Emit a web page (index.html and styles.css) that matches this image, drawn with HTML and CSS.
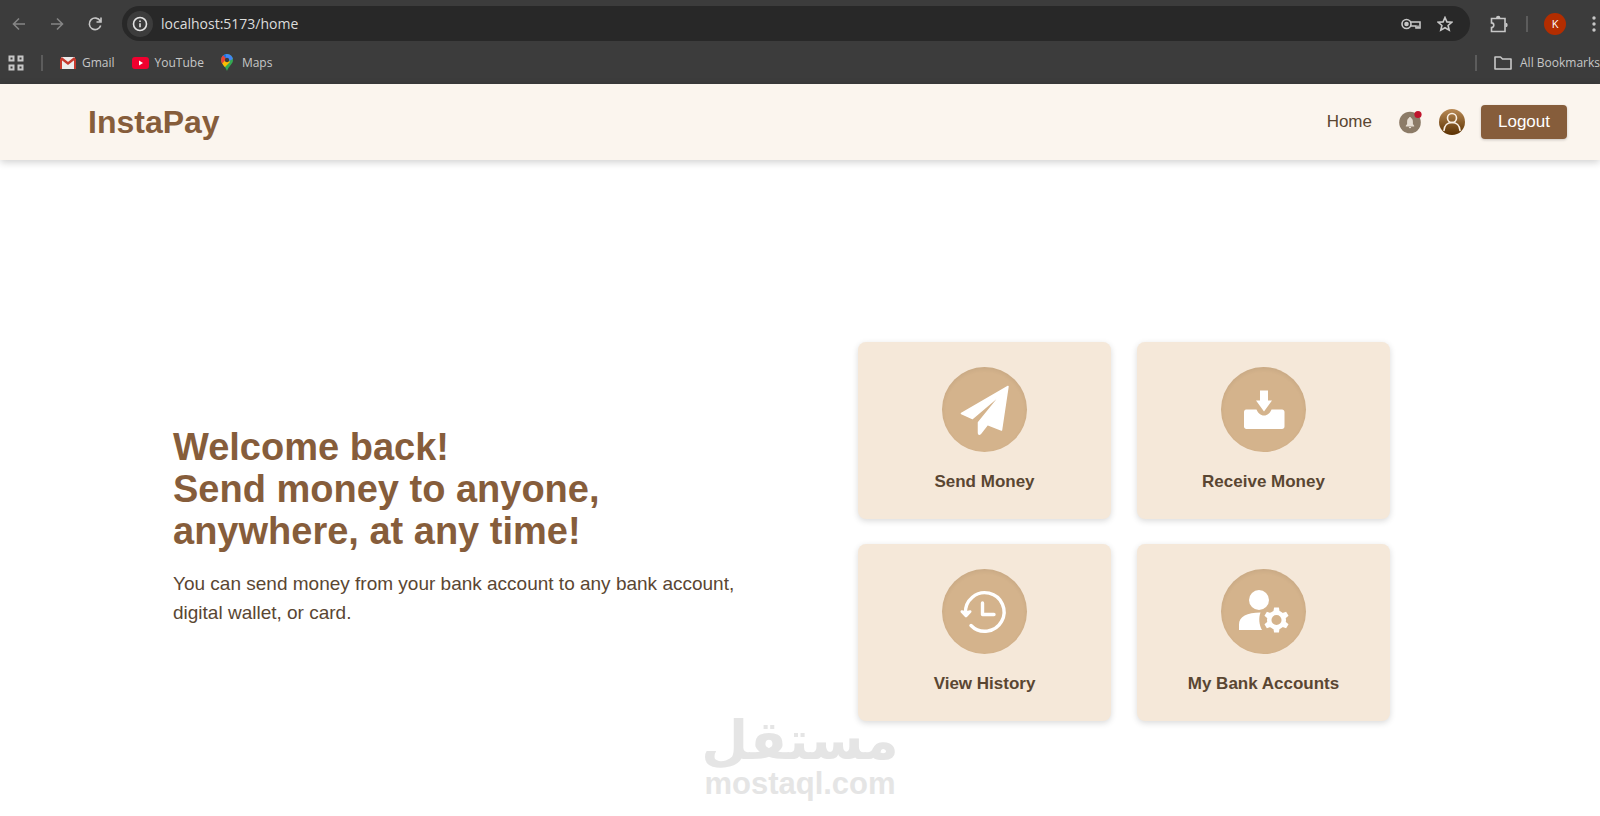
FILE: index.html
```html
<!DOCTYPE html>
<html lang="en">
<head>
    <meta charset="UTF-8">
    <meta name="viewport" content="width=device-width, initial-scale=1.0">
    <title>InstaPay</title>
    <link rel="stylesheet" href="styles.css">
</head>
<body>
    <div class="browser">
        <div class="toolbar">
            <button class="tool dim" aria-label="Back">
                <svg width="16" height="16" viewBox="0 0 16 16"><path d="M14 8H3M8 2.500L2.500 8L8 13.500"/></svg>
            </button>
            <button class="tool dim" aria-label="Forward">
                <svg width="16" height="16" viewBox="0 0 16 16"><path d="M2 8h11M8 2.500L13.500 8L8 13.500"/></svg>
            </button>
            <button class="tool" aria-label="Reload">
                <svg width="16" height="16" viewBox="0 0 16 16"><path d="M13.200 5A5.800 5.800 0 1 0 13.700 9.500M14 1.500V6H9.500"/></svg>
            </button>
            <div class="address">
                <button class="info" aria-label="Site information">
                    <svg width="16" height="16" viewBox="0 0 16 16"><circle cx="8" cy="8" r="6.500"/><path d="M8 7.200v4M8 4.500v1.600"/></svg>
                </button>
                <input class="url" type="text" value="localhost:5173/home" aria-label="Address">
                <button class="tool" aria-label="Passwords">
                    <svg width="20" height="14" viewBox="0 0 20 14"><circle cx="5.500" cy="7" r="4.500"/><circle cx="5.500" cy="7" r="1.500" fill="currentColor"/><path d="M9.700 5h9.300v6h-4V9H9.700M17 11V8.500"/></svg>
                </button>
                <button class="tool" aria-label="Bookmark">
                    <svg width="16" height="16" viewBox="0 0 16 16"><path d="M8 1.500l1.900 4.400 4.800.4-3.600 3.200 1.100 4.700L8 11.700l-4.200 2.500 1.100-4.700L1.300 6.300l4.800-.4z"/></svg>
                </button>
            </div>
            <button class="tool extensions" aria-label="Extensions">
                <svg width="18" height="18" viewBox="0 0 18 18"><path d="M1.500 3.500H15V16.500H1.500V12.500a2.300 2.300 0 0 0 0-4.600z"/><path fill="currentColor" stroke="none" d="M6 3a2.200 2.200 0 0 1 4.400 0zM15.500 7.800a2.200 2.200 0 0 1 0 4.400z"/></svg>
            </button>
            <span class="divider"></span>
            <button class="profile" aria-label="Profile">K</button>
            <button class="tool menu" aria-label="Menu">
                <svg width="4" height="16" viewBox="0 0 4 16"><g fill="currentColor" stroke="none"><circle cx="2" cy="2" r="1.700"/><circle cx="2" cy="8" r="1.700"/><circle cx="2" cy="14" r="1.700"/></g></svg>
            </button>
        </div>
        <div class="bookmarks">
            <button class="tool" aria-label="Apps">
                <svg width="16" height="16" viewBox="0 0 16 16"><path d="M1.500 1.500h4v4h-4zM10.500 1.500h4v4h-4zM1.500 10.500h4v4h-4zM10.500 10.500h4v4h-4z" stroke-width="2"/></svg>
            </button>
            <span class="divider"></span>
            <a class="bookmark" href="#">
                <svg width="16" height="16" viewBox="0 0 16 16"><path fill="#ececec" d="M1 2h14v12H1z"/><path fill="none" stroke="#c5392d" stroke-width="2" d="M1 4v10M15 4v10"/><path fill="none" stroke="#c5392d" stroke-width="2.400" d="M1 3l7 5.500L15 3"/></svg>
                Gmail
            </a>
            <a class="bookmark" href="#">
                <svg width="17" height="12" viewBox="0 0 17 12"><rect width="17" height="12" rx="3" fill="#f0002f"/><path fill="#fff" d="M7 3.500v5L11 6z"/></svg>
                YouTube
            </a>
            <a class="bookmark maps" href="#">
                <svg width="12" height="17" viewBox="0 0 12 17">
                    <clipPath id="pin"><path d="M6 0a6 6 0 0 1 6 6c0 4-4 5.500-6 11C4 11.500 0 10 0 6a6 6 0 0 1 6-6z"/></clipPath>
                    <g clip-path="url(#pin)"><path fill="#34a853" d="M0 0h12v17H0z"/><path fill="#4285f4" d="M4 0h8v5L6 8z"/><path fill="#1a73e8" d="M0 0h5v4L2 4z"/><path fill="#ea4335" d="M0 2l2-1 4 4.500-5 5-1-2z"/><path fill="#fbbc04" d="M1 10l5-6 3 4-6 6z"/></g>
                    <circle cx="6" cy="6" r="2.200" fill="#3c3c3c"/>
                </svg>
                Maps
            </a>
            <span class="divider last"></span>
            <a class="bookmark all" href="#">
                <svg width="18" height="14" viewBox="0 0 18 14"><path fill="none" stroke="#c7c7c7" stroke-width="1.600" stroke-linejoin="round" d="M1 1h5.500l2 2H17v10H1z"/></svg>
                All Bookmarks
            </a>
        </div>
    </div>

    <header class="navbar">
        <a class="logo" href="#">InstaPay</a>
        <nav class="nav-links">
            <a class="home" href="#">Home</a>
            <button class="notifications" aria-label="Notifications">
                <svg width="24" height="24" viewBox="0 0 24 24"><circle cx="11" cy="12.500" r="10.800" fill="#8c7b67"/><path fill="#e6ddd2" d="M11 7c.6 0 1 .4 1 1 1.400.5 1.900 2 1.900 4v2l1.300 1.800v.7H6.800v-.7L8.100 14v-2c0-2 .5-3.500 1.900-4 0-.6.4-1 1-1zM9.800 17h2.400a1.200 1.200 0 0 1-2.400 0z"/><circle cx="19" cy="4.500" r="3.600" fill="#c0142c"/></svg>
            </button>
            <button class="account" aria-label="Account">
                <svg width="26" height="26" viewBox="0 0 26 26">
                    <defs><linearGradient id="bronze" x1="0" y1="0" x2="0" y2="1"><stop offset="0" stop-color="#b98a55"/><stop offset="1" stop-color="#5a3000"/></linearGradient></defs>
                    <circle cx="13" cy="13" r="13" fill="url(#bronze)"/>
                    <g fill="none" stroke="#faf0e4" stroke-width="1.600" stroke-linecap="round"><circle cx="13" cy="9" r="4.500"/><path d="M5 21.500c.3-5 3.500-8 8-8s7.700 3 8 8"/></g>
                </svg>
            </button>
            <button class="logout">Logout</button>
        </nav>
    </header>

    <main class="hero">
        <section class="intro">
            <h1>Welcome back!<br>Send money to anyone,<br>anywhere, at any time!</h1>
            <p>You can send money from your bank account to any bank account, digital wallet, or card.</p>
        </section>
        <section class="actions">
            <a class="card" href="#">
                <span class="circle">
                    <svg width="50" height="50" viewBox="0 0 50 50"><path fill="#fff" stroke="#fff" stroke-linejoin="round" stroke-width="1.500" d="M48 1.500L1.500 28.500 12.500 33.500 42 8.500 18.500 37.500v10.500c0 1.500 1 1.500 2 .5l7-9L41.500 45z"/></svg>
                </span>
                Send Money
            </a>
            <a class="card" href="#">
                <span class="circle">
                    <svg width="50" height="50" viewBox="0 0 50 50"><g fill="#fff"><path d="M21 5.500h8v10h4L25 26.500l-8-11h4z"/><path d="M7 24.500h10.500c1.500 3.500 4 6 7.500 6s6-2.500 7.500-6H43c1.500 0 2.500 1 2.500 2.500v14.500c0 1.500-1 2.500-2.500 2.500H7.500C6 44 5 43 5 41.500V27C5 25.500 6 24.500 7 24.500z"/></g></svg>
                </span>
                Receive Money
            </a>
            <a class="card" href="#">
                <span class="circle">
                    <svg width="50" height="50" viewBox="0 0 50 50"><g fill="none" stroke="#fff" stroke-width="3.400" stroke-linecap="round" stroke-linejoin="round"><path d="M5.500 26A19.300 19.300 0 1 1 11 38.500"/><path d="M22.500 16v11.500H34"/><path fill="#fff" stroke-width="2.600" d="M1.800 24.500l4.200 4.500 4.200-4.500-4.200 1z"/></g></svg>
                </span>
                View History
            </a>
            <a class="card" href="#">
                <span class="circle">
                    <svg width="50" height="50" viewBox="0 0 50 50">
                        <circle cx="20" cy="13" r="10" fill="#fff"/>
                        <path fill="#fff" d="M21.500 25.500c-2 5.500-1.500 12 1.500 17.500H0V37.500C0 29.500 8 25.500 21.500 25.500z"/>
                        <g transform="translate(37.500 33)"><circle r="7.300" fill="none" stroke="#fff" stroke-width="4.500"/><g fill="#fff"><path id="tooth" d="M-3.200-8l.8-4.500h4.800l.8 4.500z"/><use href="#tooth" transform="rotate(60)"/><use href="#tooth" transform="rotate(120)"/><use href="#tooth" transform="rotate(180)"/><use href="#tooth" transform="rotate(240)"/><use href="#tooth" transform="rotate(300)"/></g></g>
                    </svg>
                </span>
                My Bank Accounts
            </a>
        </section>
    </main>

    <div class="watermark">
        <span class="watermark-name" lang="ar" dir="rtl">مستقل</span>
        <span class="watermark-site">mostaql.com</span>
    </div>
</body>
</html>
```
FILE: styles.css
```css
* {
    box-sizing: border-box;
}
body {
    margin: 0;
    min-height: 100vh;
    overflow-x: hidden;
    font-family: "Liberation Sans", Arial, sans-serif;
    color: #5a4632;
    background-color: #fff;
}
a {
    color: inherit;
    text-decoration: none;
}
button {
    padding: 0;
    border: none;
    background: none;
    font-family: inherit;
    color: inherit;
    cursor: pointer;
}
svg {
    display: block;
    flex-shrink: 0;
}

/* browser bar */
.browser {
    overflow: hidden;
    height: 84px;
    background-color: #3c3c3c;
    color: #c7c7c7;
    font-family: "Open Sans", "Noto Sans", sans-serif;
}
.toolbar {
    display: flex;
    align-items: center;
    height: 47px;
    padding-left: 11px;
}
.tool svg,
.info svg {
    fill: none;
    stroke: currentColor;
    stroke-width: 1.6;
}
.toolbar > .tool {
    margin-right: 22px;
}
.toolbar > .tool + .address {
    margin-left: -3px;
}
.dim {
    color: #858585;
}
.address {
    flex: 1;
    display: flex;
    align-items: center;
    gap: 16px;
    height: 35px;
    padding: 0 17px 0 5px;
    border-radius: 18px;
    background-color: #282828;
}
.info {
    display: flex;
    align-items: center;
    justify-content: center;
    width: 26px;
    height: 26px;
    border-radius: 50%;
    background-color: #3c3c3c;
    color: #e3e3e3;
}
.url {
    flex: 1;
    padding: 0;
    margin-left: -8px;
    border: none;
    outline: none;
    background: none;
    font-family: inherit;
    font-size: 14px;
    color: #dcdcdc;
}
.toolbar > .extensions {
    margin: 0 18px 0 20px;
}
.divider {
    width: 2px;
    height: 16px;
    background-color: #5c5c5c;
}
.profile {
    width: 22px;
    height: 22px;
    margin: 0 26px 0 16px;
    border-radius: 50%;
    background-color: #b32d00;
    color: #fff;
    font-size: 11px;
}
.toolbar > .menu {
    margin-right: 4px;
}
.bookmarks {
    display: flex;
    align-items: center;
    gap: 17px;
    height: 31px;
    padding-left: 8px;
}
.bookmark {
    display: flex;
    align-items: center;
    gap: 6px;
    font-size: 12px;
    white-space: nowrap;
}
.maps {
    gap: 9px;
}
.last {
    margin-left: auto;
}
.all {
    gap: 8px;
}

/* navbar */
.navbar {
    display: flex;
    align-items: center;
    justify-content: space-between;
    height: 76px;
    padding: 0 33px 0 88px;
    background-color: #fbf5ee;
    box-shadow: 0 2px 8px rgba(0, 0, 0, 0.2);
}
.logo {
    font-size: 32px;
    font-weight: bold;
    color: #865d3b;
}
.nav-links {
    display: flex;
    align-items: center;
    gap: 16px;
    font-size: 17px;
}
.home {
    margin-right: 11px;
}
.logout {
    height: 34px;
    padding: 0 17px;
    border-radius: 4px;
    background-color: #865d3b;
    box-shadow: 0 1px 3px rgba(0, 0, 0, 0.2);
    color: #fff;
    font-size: 17px;
}

/* hero */
.hero {
    display: flex;
    align-items: center;
    justify-content: space-between;
    padding: 182px 210px 0 173px;
}
.intro {
    width: 580px;
    padding-bottom: 10px;
}
.intro h1 {
    margin: 0 0 17px;
    font-size: 38px;
    line-height: 42px;
    color: #865d3b;
}
.intro p {
    margin: 0;
    font-size: 19px;
    line-height: 29px;
}
.actions {
    display: grid;
    grid-template-columns: 1fr 1fr;
    gap: 25px 26px;
    width: 532px;
}
.card {
    display: flex;
    flex-direction: column;
    align-items: center;
    gap: 20px;
    padding: 25px 16px 28px;
    border-radius: 8px;
    background-color: #f5e8d9;
    box-shadow: 0 2px 6px rgba(0, 0, 0, 0.15);
    font-size: 17px;
    font-weight: bold;
    line-height: 19px;
}
.circle {
    display: flex;
    align-items: center;
    justify-content: center;
    width: 85px;
    height: 85px;
    border-radius: 50%;
    background-color: #d4b38c;
    box-shadow: inset 0 2px 4px rgba(0, 0, 0, 0.06);
}

/* watermark over the page */
.watermark {
    position: absolute;
    bottom: 14px;
    left: 50%;
    display: flex;
    flex-direction: column;
    align-items: center;
    transform: translateX(-50%);
    color: #e5e5e5;
    font-weight: bold;
    pointer-events: none;
}
.watermark-name {
    font-family: "DejaVu Sans", sans-serif;
    font-size: 54px;
    line-height: 50px;
}
.watermark-site {
    font-size: 31px;
    line-height: 36px;
}
```
